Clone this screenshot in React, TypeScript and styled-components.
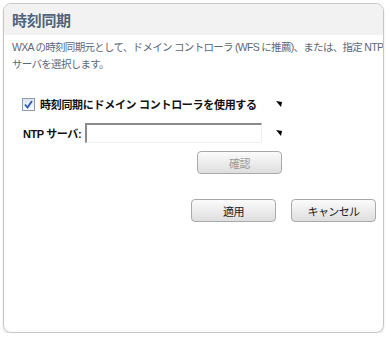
import React from "react";
import styled, { createGlobalStyle } from "styled-components";

const GlobalStyle = createGlobalStyle`
  html, body {
    margin: 0;
    padding: 0;
    background: #ffffff;
  }
  body {
    font-family: "Liberation Sans", "Noto Sans CJK JP", sans-serif;
  }
`;

const Panel = styled.div`
  margin: 3px 0 0 3px;
  width: 381px;
  height: 330px;
  box-sizing: border-box;
  border: 1px solid #c6c6c6;
  border-radius: 8px;
  box-shadow: 0 2px 2px rgba(0, 0, 0, 0.12);
  overflow: hidden;
  display: flex;
  flex-direction: column;
`;

const Header = styled.div`
  height: 31px;
  background: #f2f2f2;
  display: flex;
  align-items: center;
  padding: 0 8px;
`;

const Title = styled.h1`
  margin: 0;
  font-size: 15px;
  font-weight: bold;
  letter-spacing: -0.3px;
  color: #52627a;
`;

const Description = styled.p`
  margin: 0;
  padding: 4px 8px 0;
  font-size: 10.5px;
  line-height: 17px;
  letter-spacing: -0.7px;
  white-space: nowrap;
  color: #5b6878;
`;

const Body = styled.div`
  padding: 23px 0 0 15px;
  display: flex;
  flex-direction: column;
`;

const Row = styled.div<{ $mt?: number }>`
  display: flex;
  align-items: center;
  margin-top: ${(p) => p.$mt ?? 0}px;
`;

const Field = styled.div`
  width: 243px;
  display: flex;
  align-items: center;
`;

const CheckLabel = styled.label`
  display: flex;
  align-items: center;
  gap: 5px;
  padding-left: 3px;
  font-size: 11px;
  font-weight: bold;
  letter-spacing: -0.3px;
  white-space: nowrap;
  color: #111;
`;

const CheckBox = styled.span`
  width: 11px;
  height: 11px;
  flex: none;
  border: 1px solid #8c9cb0;
  background: linear-gradient(#dfe6ef, #f8f9fb);
  display: inline-flex;
  align-items: center;
  justify-content: center;
`;

const Marker = styled.svg`
  margin-left: 14px;
`;

const Label = styled.span`
  width: 66px;
  flex: none;
  padding-left: 4px;
  box-sizing: border-box;
  font-size: 11px;
  font-weight: bold;
  letter-spacing: -0.4px;
  white-space: nowrap;
  color: #111;
`;

const TextInput = styled.input`
  width: 177px;
  height: 20px;
  box-sizing: border-box;
  border: none;
  border-top: 2px solid #8a8a8a;
  border-left: 2px solid #8a8a8a;
  border-right: 1px solid #f0f0f0;
  border-bottom: 1px solid #f0f0f0;
  padding: 0 3px;
  outline: none;
`;

const Button = styled.button<{ $disabled?: boolean }>`
  width: 85px;
  height: 23px;
  border: 1px solid #a9a9a9;
  border-radius: 4px;
  background: linear-gradient(#fbfbfb, #dedede);
  font-family: "Liberation Sans", "Noto Sans CJK JP", sans-serif;
  font-size: 11px;
  letter-spacing: -0.6px;
  color: ${(p) => (p.$disabled ? "#9a9a9a" : "#1a1a1a")};
  padding: 0;
`;

const ConfirmRow = styled.div`
  display: flex;
  padding-left: 178px;
  margin-top: 8px;
`;

const Actions = styled.div`
  display: flex;
  gap: 15px;
  padding-left: 172px;
  margin-top: 25px;
`;

const CornerMark = () => (
  <Marker width="6" height="6" viewBox="0 0 6 6">
    <polygon points="0,0 6,1 5,6" fill="#000" />
  </Marker>
);

export default function App() {
  return (
    <>
      <GlobalStyle />
      <Panel>
        <Header>
          <Title>時刻同期</Title>
        </Header>
        <Description>
          WXA の時刻同期元として、ドメイン コントローラ (WFS に推薦)、または、指定 NTP
          <br />
          サーバを選択します。
        </Description>
        <Body>
          <Row>
            <Field>
              <CheckLabel>
                <CheckBox>
                  <svg width="9" height="9" viewBox="0 0 9 9">
                    <path d="M1 4.5 L3.5 7.5 L8 1" stroke="#2d5cb8" strokeWidth="1.8" fill="none" />
                  </svg>
                </CheckBox>
                時刻同期にドメイン コントローラを使用する
              </CheckLabel>
            </Field>
            <CornerMark />
          </Row>
          <Row $mt={11}>
            <Field>
              <Label>NTP サーバ:</Label>
              <TextInput type="text" />
            </Field>
            <CornerMark />
          </Row>
          <ConfirmRow>
            <Button $disabled>確認</Button>
          </ConfirmRow>
          <Actions>
            <Button>適用</Button>
            <Button>キャンセル</Button>
          </Actions>
        </Body>
      </Panel>
    </>
  );
}
